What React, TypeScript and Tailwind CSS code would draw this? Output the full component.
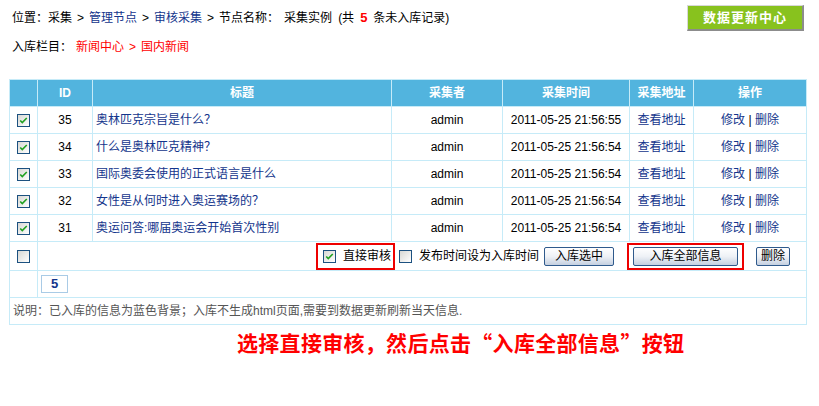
import React from "react"

const rows = [
  { id: 35, title: "奥林匹克宗旨是什么？", time: "2011-05-25 21:56:55" },
  { id: 34, title: "什么是奥林匹克精神？", time: "2011-05-25 21:56:54" },
  { id: 33, title: "国际奥委会使用的正式语言是什么", time: "2011-05-25 21:56:54" },
  { id: 32, title: "女性是从何时进入奥运赛场的？", time: "2011-05-25 21:56:54" },
  { id: 31, title: "奥运问答:哪届奥运会开始首次性别", time: "2011-05-25 21:56:54" },
]

function Check({ on }: { on?: boolean }) {
  return (
    <span className="inline-flex h-[13px] w-[13px] items-center justify-center border border-[#1c5180] bg-gradient-to-br from-[#d8d8d4] to-white align-middle">
      {on && (
        <svg viewBox="0 0 11 11" className="h-[9px] w-[9px]">
          <path d="M1.5 5.5 L4 8 L9.5 2.5" fill="none" stroke="#21a121" strokeWidth="2" />
        </svg>
      )}
    </span>
  )
}

function Btn({ children, w }: { children: React.ReactNode; w: string }) {
  return (
    <span
      className={`inline-flex h-[19px] ${w} items-center justify-center rounded-[2px] border border-[#2f5a8c] bg-gradient-to-b from-white via-[#eef1f6] to-[#c5d0e0] text-[12px] text-black`}
    >
      {children}
    </span>
  )
}

// breadcrumb separator, a little wider than a plain " > "
function Sep() {
  return <span className="px-[5px]">&gt;</span>
}

const td = "border border-[#c6ebf8] h-[27px] text-[12px]"
const link = "text-[#13358c]"

export default function App() {
  return (
    <div className="h-[406px] w-[819px] bg-white pl-[9px] font-['Liberation_Sans','Noto_Sans_CJK_SC',sans-serif] text-[12px] text-black">
      <div className="flex h-[37px] items-start justify-between pr-[15px]">
        <div className="pl-[3px] pt-[10px] leading-[16px]">
          位置：采集<Sep />
          <span className={link}>管理节点</span>
          <Sep />
          <span className={link}>审核采集</span>
          <Sep />
          节点名称：<span className="ml-[5px]">采集实例</span>
          <span className="ml-[6px]">(共</span>
          <b className="mx-[6px] text-[13px] text-[#ff0000]">5</b>条未入库记录)
        </div>
        <div className="mt-[5px] flex h-[26px] w-[117px] items-center justify-center border-r-2 border-b-2 border-t border-l border-t-[#d8d8d8] border-l-[#d8d8d8] border-r-[#8c8c8c] border-b-[#8c8c8c] bg-[#88c21e] text-[13px] font-bold tracking-[1px] text-white">
          数据更新中心
        </div>
      </div>
      <div className="h-[42px] pl-[3px] pt-[2px] leading-[16px]">
        入库栏目：
        <span className="ml-[4px] text-[#ff0000]">
          新闻中心<Sep />国内新闻
        </span>
      </div>

      <table className="w-[797px] table-fixed border-collapse border border-[#5cb5db]">
        <colgroup>
          <col className="w-[28px]" />
          <col className="w-[55px]" />
          <col className="w-[299px]" />
          <col className="w-[111px]" />
          <col className="w-[127px]" />
          <col className="w-[64px]" />
          <col className="w-[113px]" />
        </colgroup>
        <thead>
          <tr className="h-[27px] bg-[#52b4de] text-[12px] font-bold text-white">
            <th className="border border-[#c6ebf8]" />
            <th className="border border-[#c6ebf8]">ID</th>
            <th className="border border-[#c6ebf8]">标题</th>
            <th className="border border-[#c6ebf8]">采集者</th>
            <th className="border border-[#c6ebf8]">采集时间</th>
            <th className="border border-[#c6ebf8]">采集地址</th>
            <th className="border border-[#c6ebf8]">操作</th>
          </tr>
        </thead>
        <tbody>
          {rows.map((r) => (
            <tr key={r.id}>
              <td className={`${td} text-center`}>
                <Check on />
              </td>
              <td className={`${td} text-center`}>{r.id}</td>
              <td className={`${td} pl-[3px] ${link}`}>{r.title}</td>
              <td className={`${td} text-center`}>admin</td>
              <td className={`${td} text-center`}>{r.time}</td>
              <td className={`${td} text-center ${link}`}>查看地址</td>
              <td className={`${td} text-center`}>
                <span className={link}>修改</span> | <span className={link}>删除</span>
              </td>
            </tr>
          ))}
          <tr>
            <td className={`${td} h-[29px] text-center`}>
              <Check />
            </td>
            <td colSpan={6} className={`${td} h-[29px]`}>
              <div className="flex items-center justify-end pr-[16px]">
                <div className="flex h-[27px] w-[79px] items-center gap-[7px] border-2 border-[#ee0000] pl-[5px]">
                  <Check on />
                  <span>直接审核</span>
                </div>
                <span className="ml-[4px]">
                  <Check />
                </span>
                <span className="ml-[7px]">发布时间设为入库时间</span>
                <span className="ml-[5px]">
                  <Btn w="w-[70px]">入库选中</Btn>
                </span>
                <div className="ml-[13px] flex h-[27px] w-[117px] items-center justify-center border-2 border-[#ee0000]">
                  <Btn w="w-[105px]">入库全部信息</Btn>
                </div>
                <span className="ml-[12px]">
                  <Btn w="w-[34px]">删除</Btn>
                </span>
              </div>
            </td>
          </tr>
          <tr>
            <td className={td} />
            <td colSpan={6} className={`${td} pl-[3px]`}>
              <span className="inline-flex h-[18px] w-[27px] items-center justify-center border border-[#a9cbe6] text-[13px] font-bold text-[#13358c]">
                5
              </span>
            </td>
          </tr>
          <tr>
            <td colSpan={7} className={`${td} h-[26px] pl-[3px] text-[#555]`}>
              说明：已入库的信息为蓝色背景；入库不生成html页面,需要到数据更新刷新当天信息.
            </td>
          </tr>
        </tbody>
      </table>

      <div className="pl-[228px] pt-[3px] font-['Noto_Sans_CJK_SC',sans-serif] text-[21px] font-bold leading-[28px] tracking-[0.3px] text-[#ff0000]">
        选择直接审核，然后点击“入库全部信息”按钮
      </div>
    </div>
  )
}
